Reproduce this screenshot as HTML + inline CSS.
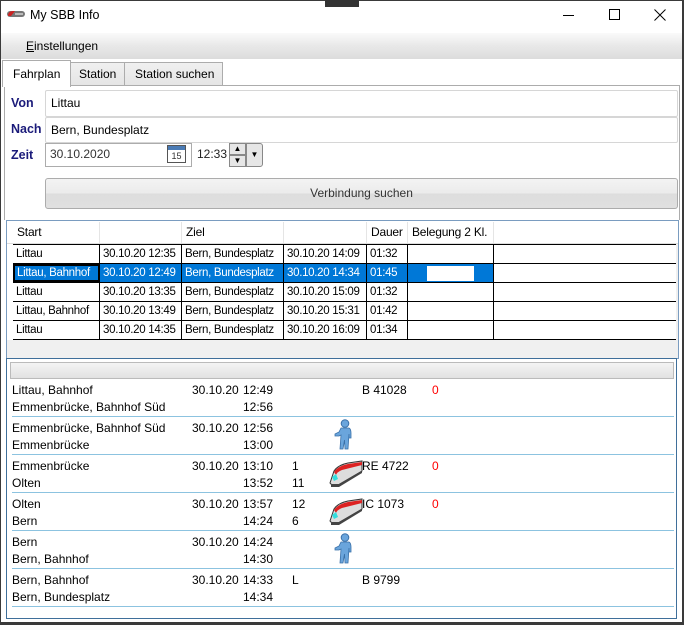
<!DOCTYPE html>
<html><head><meta charset="utf-8">
<style>
*{box-sizing:border-box;margin:0;padding:0}
body{width:684px;height:625px;overflow:hidden;background:#fff;font-family:"Liberation Sans",sans-serif;font-size:12px;color:#000;position:relative}
.a{position:absolute;white-space:nowrap}
.lbl{font-weight:bold;color:#1b1b7a;font-size:12.5px}
.inp{position:absolute;border:1px solid #d6d6d6;border-radius:2px;background:#fff}
.hc{position:absolute;top:0;height:21px;line-height:21px;padding-left:4px;border-right:1px solid #e5e5e5;white-space:nowrap;overflow:hidden;letter-spacing:-0.2px}
.row{position:absolute;left:13px;width:663px;height:19px;border-bottom:1px solid #000;background:#fff}
.c{position:absolute;top:0;height:18px;line-height:18px;padding-left:3px;border-right:1px solid #000;white-space:nowrap;overflow:hidden;background:#fff;font-size:11.5px;letter-spacing:-0.3px}
.sel .c{background:#0078d7;color:#fff}
.d{position:absolute;left:12px;width:662px;height:38px;border-bottom:1px solid #8cc3e0}
.d span{position:absolute;line-height:16px;white-space:nowrap}
.red{color:#f00}
</style></head><body>
<div class="a" style="left:0;top:0;width:684px;height:625px;border:1px solid #3a3a3a;border-bottom:3px solid #3a3a3a;border-right:2px solid #3a3a3a"></div>
<div class="a" style="left:325px;top:0;width:34px;height:7px;background:#333"></div>
<svg class="a" style="left:7px;top:10px" width="18" height="8"><rect x="0" y="1" width="18" height="6" rx="3" fill="#777"/><path d="M1 6 Q1 1 6 1 L8 1 L4 6Z" fill="#c22"/><rect x="8" y="3" width="8" height="2" fill="#bbb"/></svg>
<div class="a" style="left:30px;top:8px;font-size:12.5px">My SBB Info</div>
<div class="a" style="left:563px;top:15px;width:11px;height:1px;background:#000"></div>
<div class="a" style="left:609px;top:9px;width:11px;height:11px;border:1px solid #000"></div>
<svg class="a" style="left:654px;top:9px" width="12" height="12"><path d="M0.5 0.5L11.5 11.5M11.5 0.5L0.5 11.5" stroke="#000" stroke-width="1"/></svg>
<div class="a" style="left:1px;top:33px;width:681px;height:26px;background:linear-gradient(#fafafa,#e8e8e8 50%,#dcdcdc)"></div>
<div class="a" style="left:26px;top:39px"><u>E</u>instellungen</div>
<div class="a" style="left:4px;top:85px;width:676px;height:1px;background:#acacac"></div>
<div class="a" style="left:4px;top:85px;width:1px;height:135px;background:#acacac"></div>
<div class="a" style="left:679px;top:85px;width:1px;height:135px;background:#acacac"></div>
<div class="a" style="left:70px;top:62px;width:55px;height:24px;border:1px solid #acacac;background:linear-gradient(#f0f0f0,#e5e5e5);padding:4px 0 0 8px">Station</div>
<div class="a" style="left:124px;top:62px;width:99px;height:24px;border:1px solid #acacac;background:linear-gradient(#f0f0f0,#e5e5e5);padding:4px 0 0 10px">Station suchen</div>
<div class="a" style="left:2px;top:60px;width:69px;height:27px;border:1px solid #acacac;border-bottom:none;background:#fff;padding:6px 0 0 10px">Fahrplan</div>
<div class="a lbl" style="left:11px;top:96px">Von</div>
<div class="inp" style="left:45px;top:90px;width:633px;height:27px"></div>
<div class="a" style="left:51px;top:96px">Littau</div>
<div class="a lbl" style="left:11px;top:122px">Nach</div>
<div class="inp" style="left:45px;top:117px;width:633px;height:26px"></div>
<div class="a" style="left:51px;top:123px">Bern, Bundesplatz</div>
<div class="a lbl" style="left:11px;top:148px">Zeit</div>
<div class="a" style="left:45px;top:143px;width:147px;height:24px;border:1px solid #acacac;background:#fff"></div>
<div class="a" style="left:50px;top:147px;color:#333">30.10.2020</div>
<div class="a" style="left:167px;top:145px;width:19px;height:18px;border:1px solid #555;background:#fff;font-size:9px;text-align:center;line-height:20px;color:#333"><div style="position:absolute;left:0;top:0;width:17px;height:4px;background:#4a7bb5"></div>15</div>
<div class="a" style="left:197px;top:147px;color:#222">12:33</div>
<div class="a" style="left:229px;top:143px;width:17px;height:12px;border:1px solid #888;background:#e6e6e6;font-size:8px;text-align:center;line-height:10px">▲</div>
<div class="a" style="left:229px;top:155px;width:17px;height:12px;border:1px solid #888;background:#e6e6e6;font-size:8px;text-align:center;line-height:10px">▼</div>
<div class="a" style="left:246px;top:143px;width:17px;height:24px;border:1px solid #888;border-radius:0 3px 3px 0;background:#e6e6e6;font-size:8px;text-align:center;line-height:22px">▼</div>
<div class="a" style="left:45px;top:178px;width:633px;height:31px;border:1px solid #acacac;border-radius:3px;background:linear-gradient(#f3f3f3,#ebebeb 50%,#dddddd 50%,#e0e0e0);text-align:center;line-height:29px;color:#333">Verbindung suchen</div>
<div class="a" style="left:6px;top:220px;width:673px;height:139px;border:1px solid #7a9cc0;background:#f0f0f0"></div>
<div class="a" style="left:7px;top:221px;width:671px;height:23px;background:#fff;border-bottom:1px solid #ddd"></div>
<div class="a" style="left:7px;top:244px;width:6px;height:96px;background:#fff"></div>
<div class="a" style="left:13px;top:222px;width:663px;height:22px">
<div class="hc" style="left:0;width:87px">Start</div><div class="hc" style="left:87px;width:82px"></div><div class="hc" style="left:169px;width:102px">Ziel</div><div class="hc" style="left:271px;width:83px"></div><div class="hc" style="left:354px;width:41px">Dauer</div><div class="hc" style="left:395px;width:86px">Belegung 2 Kl.</div>
</div>
<div class="a" style="left:13px;top:244px;width:663px;height:1px;background:#000"></div>
<div class="a" style="left:13px;top:244px;width:1px;height:96px;background:#000"></div>
<div class="row" style="top:245px"><div class="c" style="left:0;width:87px">Littau</div><div class="c" style="left:87px;width:82px">30.10.20 12:35</div><div class="c" style="left:169px;width:102px">Bern, Bundesplatz</div><div class="c" style="left:271px;width:83px">30.10.20 14:09</div><div class="c" style="left:354px;width:41px">01:32</div><div class="c" style="left:395px;width:86px"></div></div>
<div class="row sel" style="top:264px"><div class="c" style="left:0;width:87px;border:2px solid #000;line-height:14px;padding-left:2px">Littau, Bahnhof</div><div class="c" style="left:87px;width:82px">30.10.20 12:49</div><div class="c" style="left:169px;width:102px">Bern, Bundesplatz</div><div class="c" style="left:271px;width:83px">30.10.20 14:34</div><div class="c" style="left:354px;width:41px">01:45</div><div class="c" style="left:395px;width:86px"><div style="position:absolute;left:19px;top:2px;width:47px;height:15px;background:#fff"></div></div></div>
<div class="row" style="top:283px"><div class="c" style="left:0;width:87px">Littau</div><div class="c" style="left:87px;width:82px">30.10.20 13:35</div><div class="c" style="left:169px;width:102px">Bern, Bundesplatz</div><div class="c" style="left:271px;width:83px">30.10.20 15:09</div><div class="c" style="left:354px;width:41px">01:32</div><div class="c" style="left:395px;width:86px"></div></div>
<div class="row" style="top:302px"><div class="c" style="left:0;width:87px">Littau, Bahnhof</div><div class="c" style="left:87px;width:82px">30.10.20 13:49</div><div class="c" style="left:169px;width:102px">Bern, Bundesplatz</div><div class="c" style="left:271px;width:83px">30.10.20 15:31</div><div class="c" style="left:354px;width:41px">01:42</div><div class="c" style="left:395px;width:86px"></div></div>
<div class="row" style="top:321px"><div class="c" style="left:0;width:87px">Littau</div><div class="c" style="left:87px;width:82px">30.10.20 14:35</div><div class="c" style="left:169px;width:102px">Bern, Bundesplatz</div><div class="c" style="left:271px;width:83px">30.10.20 16:09</div><div class="c" style="left:354px;width:41px">01:34</div><div class="c" style="left:395px;width:86px"></div></div>
<div class="a" style="left:6px;top:358px;width:671px;height:261px;border:1px solid #3f6f9a;background:#fff"></div>
<div class="a" style="left:10px;top:362px;width:664px;height:17px;border:1px solid #bbb;background:linear-gradient(#f4f4f4,#e2e2e2)"></div>
<svg width="0" height="0" style="position:absolute"><defs>
<g id="walk"><circle cx="13" cy="4.5" r="3.8" fill="#6aa5dc" stroke="#3a70a8"/><path d="M9 9 L17 9 Q19 10 19 14 L19 19 L17 19 L17 15 L16 30 L13 30 L12.5 21 L11 30 L8 30 L9 16 L7 17 L3 17 L3 15 L7 13Z" fill="#6aa5dc" stroke="#3a70a8" stroke-width="0.8"/></g>
<g id="train"><path d="M2 24 L6 12 Q10 6 20 4 L34 2 L34 12 L10 26 Q4 27 2 24Z" fill="#ddd" stroke="#333"/><path d="M6 13 Q10 7 20 5 L34 3 L34 6 L14 11 Q9 13 8 16Z" fill="#d22"/><path d="M4 18 L8 15 L10 20 L6 22Z" fill="#3dd"/><path d="M3 25 L11 25 L34 12 L34 14 L11 28 L3 28Z" fill="#444"/></g>
</defs></svg>
<div class="d" style="top:379px"><span style="left:0;top:3px">Littau, Bahnhof</span><span style="left:0;top:20px">Emmenbrücke, Bahnhof Süd</span><span style="left:180px;top:3px">30.10.20</span><span style="left:231px;top:3px">12:49</span><span style="left:231px;top:20px">12:56</span><span style="left:350px;top:3px">B 41028</span><span class="red" style="left:420px;top:3px">0</span></div>
<div class="d" style="top:417px"><span style="left:0;top:3px">Emmenbrücke, Bahnhof Süd</span><span style="left:0;top:20px">Emmenbrücke</span><span style="left:180px;top:3px">30.10.20</span><span style="left:231px;top:3px">12:56</span><span style="left:231px;top:20px">13:00</span><svg style="position:absolute;left:320px;top:2px" width="24" height="32"><use href="#walk"/></svg></div>
<div class="d" style="top:455px"><span style="left:0;top:3px">Emmenbrücke</span><span style="left:0;top:20px">Olten</span><span style="left:180px;top:3px">30.10.20</span><span style="left:231px;top:3px">13:10</span><span style="left:231px;top:20px">13:52</span><span style="left:280px;top:3px">1</span><span style="left:280px;top:20px">11</span><svg style="position:absolute;left:316px;top:4px" width="36" height="30"><use href="#train"/></svg><span style="left:350px;top:3px">RE 4722</span><span class="red" style="left:420px;top:3px">0</span></div>
<div class="d" style="top:493px"><span style="left:0;top:3px">Olten</span><span style="left:0;top:20px">Bern</span><span style="left:180px;top:3px">30.10.20</span><span style="left:231px;top:3px">13:57</span><span style="left:231px;top:20px">14:24</span><span style="left:280px;top:3px">12</span><span style="left:280px;top:20px">6</span><svg style="position:absolute;left:316px;top:4px" width="36" height="30"><use href="#train"/></svg><span style="left:350px;top:3px">IC 1073</span><span class="red" style="left:420px;top:3px">0</span></div>
<div class="d" style="top:531px"><span style="left:0;top:3px">Bern</span><span style="left:0;top:20px">Bern, Bahnhof</span><span style="left:180px;top:3px">30.10.20</span><span style="left:231px;top:3px">14:24</span><span style="left:231px;top:20px">14:30</span><svg style="position:absolute;left:320px;top:2px" width="24" height="32"><use href="#walk"/></svg></div>
<div class="d" style="top:569px"><span style="left:0;top:3px">Bern, Bahnhof</span><span style="left:0;top:20px">Bern, Bundesplatz</span><span style="left:180px;top:3px">30.10.20</span><span style="left:231px;top:3px">14:33</span><span style="left:231px;top:20px">14:34</span><span style="left:280px;top:3px">L</span><span style="left:350px;top:3px">B 9799</span></div>
</body></html>
